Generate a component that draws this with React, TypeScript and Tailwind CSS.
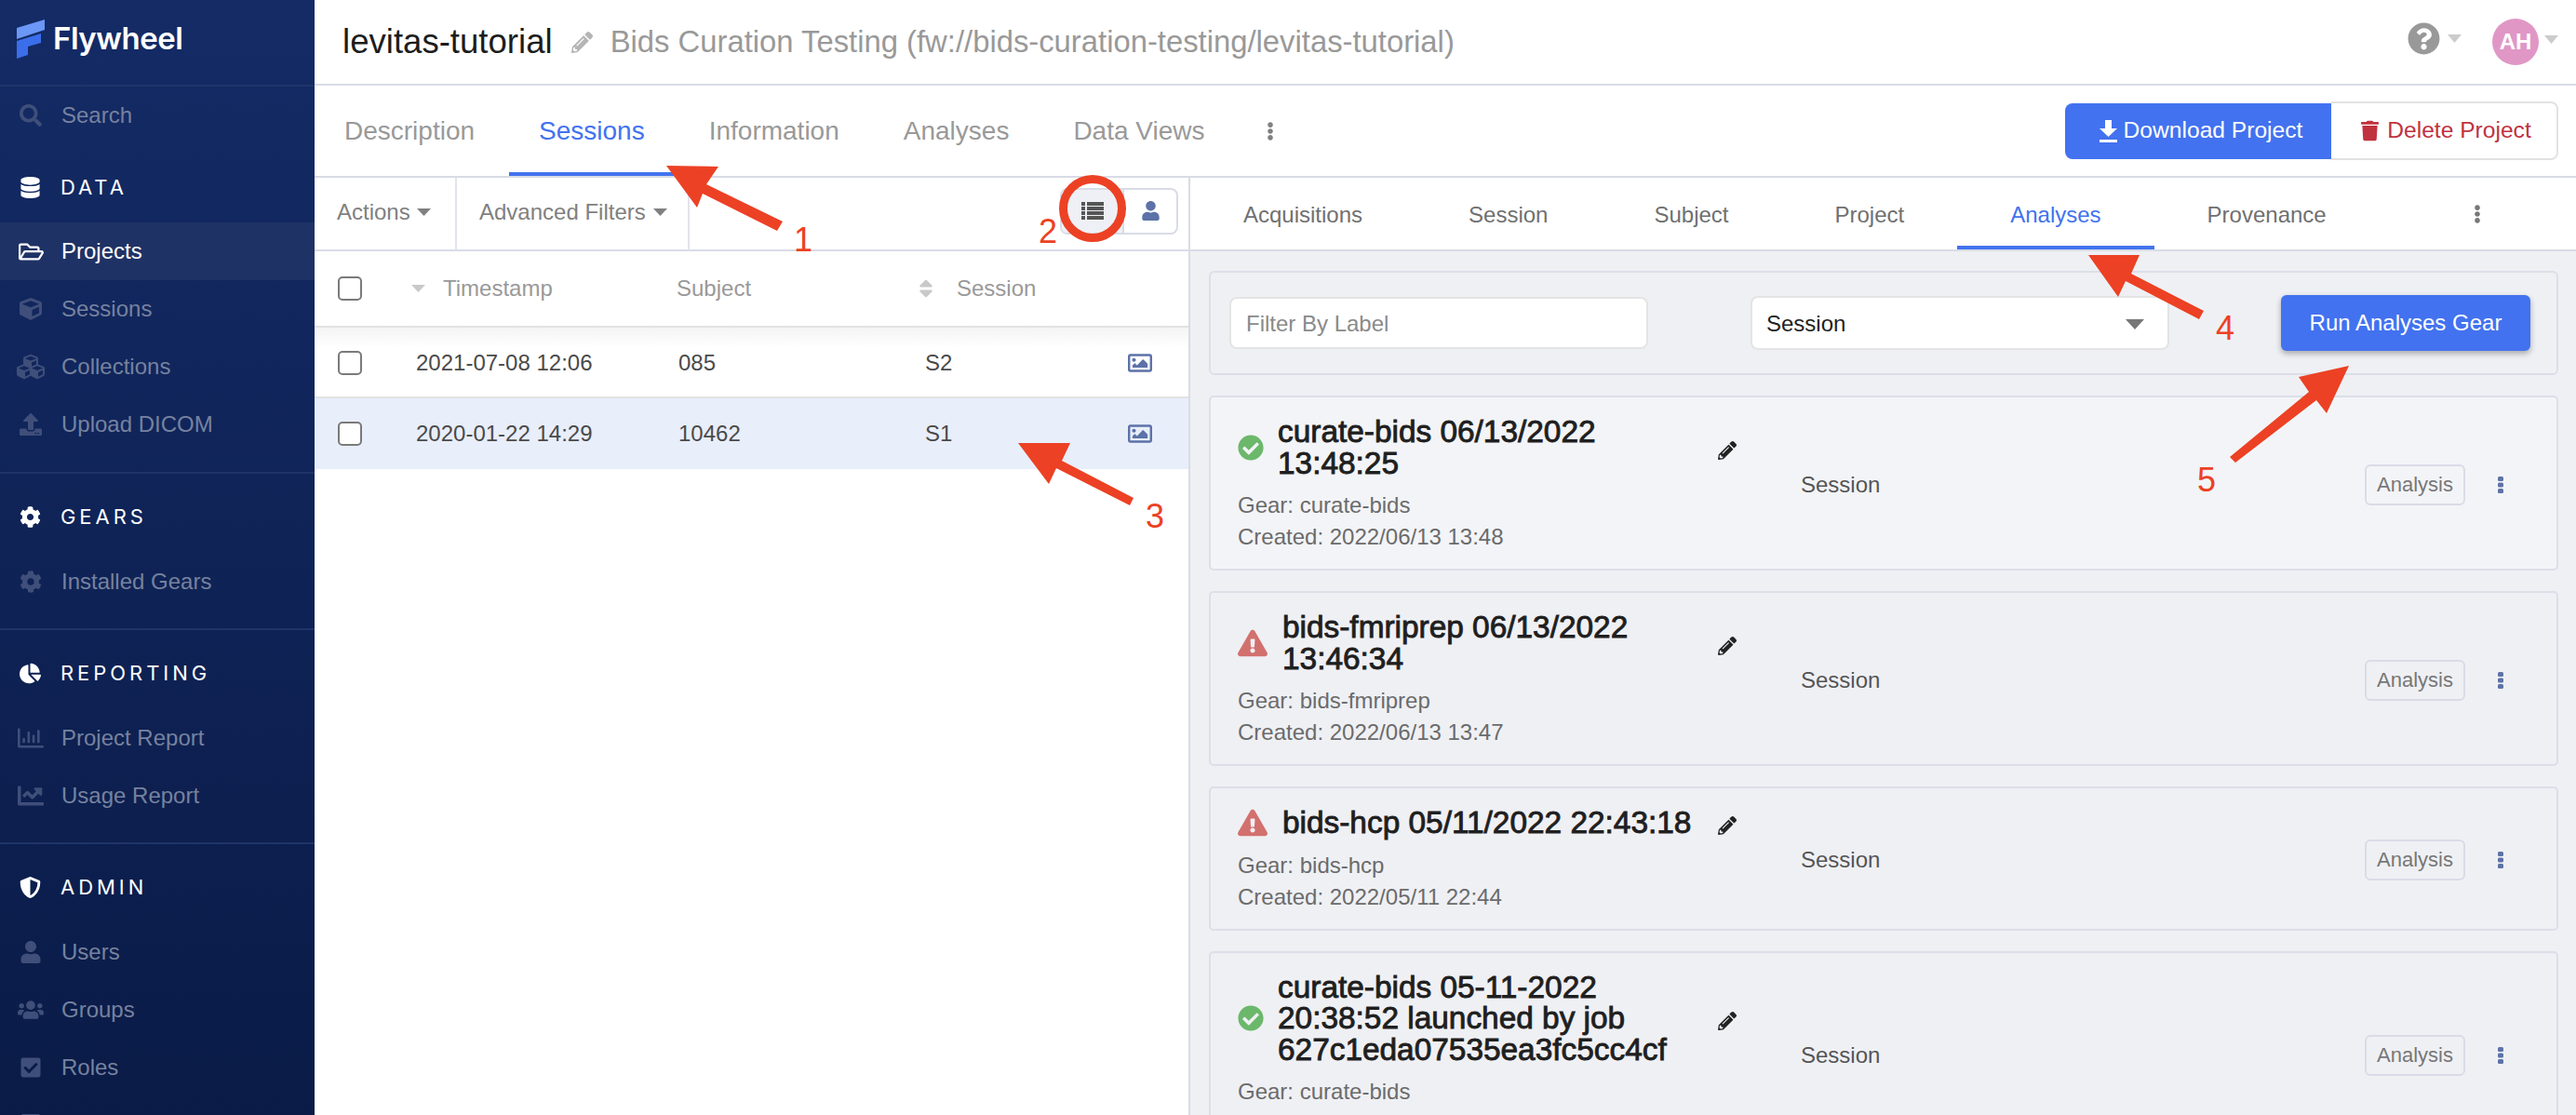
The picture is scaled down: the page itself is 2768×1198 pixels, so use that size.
import type { ReactNode } from 'react'
import {
  FaSearch, FaDatabase, FaRegFolderOpen, FaCube, FaCubes, FaUpload, FaCog, FaChartPie, FaRegChartBar,
  FaChartLine, FaShieldAlt, FaUser, FaUsers, FaCheckSquare, FaPencilAlt, FaQuestionCircle, FaTrash,
  FaRegImage, FaCheckCircle, FaExclamationTriangle, FaEllipsisV, FaSort, FaTabletAlt,
} from 'react-icons/fa'

function Caret({ className = '', w = 14, h = 8 }: { className?: string; w?: number; h?: number }) {
  return (
    <svg width={w} height={h} viewBox="0 0 14 8" preserveAspectRatio="none" className={className} fill="currentColor">
      <polygon points="0,0 14,0 7,8" />
    </svg>
  )
}

function Logo() {
  return (
    <div className="h-[91px] flex items-center pl-[18px] gap-[9px]">
      <svg width="30" height="42" viewBox="0 0 30 42" className="mb-[8px]">
        <path d="M0 9 L30 0 V11 L0 21Z" fill="#6b97f7" />
        <path d="M0 23 L26 15 V25 L12 29 V38 L0 42Z" fill="#3a6eea" />
      </svg>
      <span className="text-[33px] font-semibold text-white font-['Inter',sans-serif] tracking-[-0.5px] mb-[8px]">Flywheel</span>
    </div>
  )
}

function NavItem({ icon, label, active }: { icon: ReactNode; label?: string; active?: boolean }) {
  return (
    <div className={`h-[62px] flex items-center ${active ? 'bg-[#1f3265] text-white' : 'text-[#76829f]'}`}>
      <span className={`w-[66px] flex justify-center text-[24px] ${active ? 'text-white' : 'text-[#3f4f7a]'}`}>{icon}</span>
      <span className="text-[24px]">{label}</span>
    </div>
  )
}

function NavHeading({ icon, label }: { icon: ReactNode; label: string }) {
  return (
    <div className="h-[62px] flex items-center text-white">
      <span className="w-[65px] flex justify-center text-[23px]">{icon}</span>
      <span className="text-[22px] tracking-[0.18em] font-['Inter',sans-serif]">{label}</span>
    </div>
  )
}

function Sidebar() {
  return (
    <aside className="w-[338px] shrink-0 h-full overflow-hidden bg-gradient-to-b from-[#142b66] to-[#0a1b47]">
      <Logo />
      <div className="border-t-2 border-[#1f3468]">
        <NavItem icon={<FaSearch />} label="Search" />
      </div>
      <div className="mt-[15px] pb-[20px] border-b-2 border-[#1f3468]">
        <NavHeading icon={<FaDatabase />} label="DATA" />
        <div className="mt-[7px]">
          <NavItem active icon={<FaRegFolderOpen className="text-[27px]" />} label="Projects" />
          <NavItem icon={<FaCube />} label="Sessions" />
          <NavItem icon={<FaCubes className="text-[30px]" />} label="Collections" />
          <NavItem icon={<FaUpload />} label="Upload DICOM" />
        </div>
      </div>
      <div className="mt-[15px] pb-[19px] border-b-2 border-[#1f3468]">
        <NavHeading icon={<FaCog />} label="GEARS" />
        <div className="mt-[8px]">
          <NavItem icon={<FaCog />} label="Installed Gears" />
        </div>
      </div>
      <div className="mt-[15px] pb-[19px] border-b-2 border-[#1f3468]">
        <NavHeading icon={<FaChartPie />} label="REPORTING" />
        <div className="mt-[8px]">
          <NavItem icon={<FaRegChartBar className="text-[28px]" />} label="Project Report" />
          <NavItem icon={<FaChartLine className="text-[28px]" />} label="Usage Report" />
        </div>
      </div>
      <div className="mt-[15px]">
        <NavHeading icon={<FaShieldAlt />} label="ADMIN" />
        <div className="mt-[8px]">
          <NavItem icon={<FaUser />} label="Users" />
          <NavItem icon={<FaUsers className="text-[28px]" />} label="Groups" />
          <NavItem icon={<FaCheckSquare />} label="Roles" />
          <NavItem icon={<FaTabletAlt />} />
        </div>
      </div>
    </aside>
  )
}

function TopBar() {
  return (
    <header className="h-[92px] shrink-0 border-b-2 border-[#d9dce6] flex items-center pl-[30px] pr-[19px]">
      <span className="text-[36.6px] text-[#1d1d1d]">levitas-tutorial</span>
      <FaPencilAlt className="ml-[20px] text-[23px] text-[#b5b5b5]" />
      <span className="ml-[19px] text-[32.8px] text-[#999999]">Bids Curation Testing (fw://bids-curation-testing/levitas-tutorial)</span>
      <div className="ml-auto flex items-center">
        <FaQuestionCircle className="text-[35px] text-[#999999] mb-[8px]" />
        <Caret className="ml-[8px] mb-[8px] text-[#cccccc]" w={15} h={9} />
        <div className="ml-[33px] w-[50px] h-[50px] rounded-full bg-[#e097c6] text-white text-[24px] font-bold flex items-center justify-center">AH</div>
        <Caret className="ml-[6px] mb-[6px] text-[#cccccc]" w={15} h={9} />
      </div>
    </header>
  )
}

function ProjectTabs() {
  const tabs = ['Description', 'Sessions', 'Information', 'Analyses', 'Data Views']
  return (
    <div className="h-[99px] shrink-0 border-b-2 border-[#d9dce6] flex items-stretch pr-[19px]">
      <div className="flex items-stretch gap-[5px]">
        {tabs.map(t => (
          <div
            key={t}
            className={`px-[32px] flex items-center text-[28px] ${t === 'Sessions' ? 'text-[#4272ef] border-b-4 border-[#4272ef] pt-[4px]' : 'text-[#999999]'}`}
          >
            {t}
          </div>
        ))}
      </div>
      <div className="ml-[28px] flex items-center text-[#808080] text-[20px]"><FaEllipsisV /></div>
      <div className="ml-auto flex items-center">
        <button className="w-[286px] h-[60px] pl-[6px] bg-[#4272ef] rounded-l-[8px] text-white text-[24.6px] flex items-center justify-center gap-[7px]">
          <svg width="19" height="24" viewBox="0 0 19 24" fill="#ffffff">
            <path d="M6 0 H13 V9 H19 L9.5 18 L0 9 H6Z" />
            <rect x="0" y="21" width="19" height="3" />
          </svg>
          Download Project
        </button>
        <button className="w-[244px] h-[63px] pl-[5px] border-2 border-l-0 border-[#e2e2e2] rounded-r-[8px] text-[#c0323e] text-[24.6px] flex items-center justify-center gap-[9px]">
          <FaTrash className="w-[19px] h-[25px]" />
          Delete Project
        </button>
      </div>
    </div>
  )
}

function Checkbox() {
  return (
    <div className="w-[76px] flex justify-center">
      <span className="w-[26px] h-[26px] rounded-[5px] border-2 border-[#7a7a7a] bg-white" />
    </div>
  )
}

function SessionRow({ time, subject, session, selected }: { time: string; subject: string; session: string; selected?: boolean }) {
  return (
    <div className={`h-[76px] pt-[2px] flex items-center text-[24px] text-[#4a4a4a] border-b-2 ${selected ? 'bg-[#e8eefa] border-transparent' : 'bg-gradient-to-b from-[#f4f4f4] to-white to-30% border-[#e2e2e2]'}`}>
      <Checkbox />
      <div className="w-[315px] pl-[33px]">{time}</div>
      <div className="w-[265px]">{subject}</div>
      <div className="w-[218px]">{session}</div>
      <FaRegImage className="text-[26px] text-[#5d72a8]" />
    </div>
  )
}

function SessionsPanel() {
  return (
    <section className="w-[941px] shrink-0 border-r-2 border-[#d9dce6] flex flex-col bg-white">
      <div className="h-[79px] shrink-0 border-b-2 border-[#d9dce6] flex items-stretch text-[24px] text-[#808080]">
        <div className="w-[153px] pl-[24px] pb-[3px] border-r-2 border-[#e2e4ec] flex items-center gap-[7px]">
          Actions <Caret className="text-[#808080]" w={15} h={8} />
        </div>
        <div className="w-[250px] pl-[24px] pb-[3px] border-r-2 border-[#e2e4ec] flex items-center gap-[8px]">
          Advanced Filters <Caret className="text-[#808080]" w={15} h={8} />
        </div>
        <div className="ml-auto mr-[11px] mb-[6px] flex items-center">
          <div className="w-[127px] h-[50px] border-2 border-[#d9dce6] rounded-[8px] flex overflow-hidden">
            <div className="w-[67px] bg-[#eef0f5] border-r-2 border-[#d9dce6] flex items-center justify-center">
              <svg width="24" height="19" viewBox="0 0 24 19" fill="#555555">
                <rect x="0" y="0" width="4" height="4" /><rect x="6" y="0" width="18" height="4" />
                <rect x="0" y="5" width="4" height="4" /><rect x="6" y="5" width="18" height="4" />
                <rect x="0" y="10" width="4" height="4" /><rect x="6" y="10" width="18" height="4" />
                <rect x="0" y="15" width="4" height="4" /><rect x="6" y="15" width="18" height="4" />
              </svg>
            </div>
            <div className="flex-1 flex items-center justify-center text-[#5d72a8] text-[21px]"><FaUser /></div>
          </div>
        </div>
      </div>
      <div className="h-[82px] shrink-0 border-b-2 border-[#e2e2e2] flex items-center text-[24px] text-[#999999]">
        <Checkbox />
        <div className="w-[313px] pl-[28px] flex items-center gap-[19px]">
          <Caret className="text-[#c9c9c9]" w={15} h={8} />
          Timestamp
        </div>
        <div className="w-[256px]">Subject</div>
        <div className="flex items-center gap-[21px]">
          <FaSort className="text-[24px] text-[#c9c9c9]" />
          Session
        </div>
      </div>
      <SessionRow time="2021-07-08 12:06" subject="085" session="S2" />
      <SessionRow time="2020-01-22 14:29" subject="10462" session="S1" selected />
    </section>
  )
}

function AnalysisTabs() {
  const tabs = ['Acquisitions', 'Session', 'Subject', 'Project', 'Analyses', 'Provenance']
  return (
    <div className="h-[79px] shrink-0 bg-white border-b-2 border-[#d9dce6] flex items-stretch">
      {tabs.map(t => (
        <div
          key={t}
          className={`px-[57px] pt-[7px] border-b-4 flex items-center text-[24px] ${t === 'Analyses' ? 'text-[#4272ef] border-[#4272ef]' : 'text-[#707070] border-transparent'}`}
        >
          {t}
        </div>
      ))}
      <div className="ml-[95px] flex items-center text-[#777777] text-[20px]"><FaEllipsisV /></div>
    </div>
  )
}

type Analysis = { title: string; gear: string; created: string; ok: boolean; light?: boolean }

const analyses: Analysis[] = [
  { title: 'curate-bids 06/13/2022 13:48:25', gear: 'curate-bids', created: '2022/06/13 13:48', ok: true, light: true },
  { title: 'bids-fmriprep 06/13/2022 13:46:34', gear: 'bids-fmriprep', created: '2022/06/13 13:47', ok: false },
  { title: 'bids-hcp 05/11/2022 22:43:18', gear: 'bids-hcp', created: '2022/05/11 22:44', ok: false },
  { title: 'curate-bids 05-11-2022 20:38:52 launched by job 627c1eda07535ea3fc5cc4cf', gear: 'curate-bids', created: '2022/05/11 14:38', ok: true },
]

function AnalysisCard({ item }: { item: Analysis }) {
  return (
    <div className={`shrink-0 border-2 border-[#dcdfe8] rounded-[5px] pl-[29px] pt-[20px] pb-[17px] flex items-center ${item.light ? 'bg-[#f3f4f7]' : 'bg-[#eff0f4]'}`}>
      <div className="w-[538px] shrink-0">
        <div className="flex items-center">
          {item.ok ? (
            <FaCheckCircle className="w-[28px] h-[28px] mr-[15px] shrink-0 text-[#6bb86b]" />
          ) : (
            <FaExclamationTriangle className="w-[32px] h-[30px] mr-[16px] shrink-0 text-[#d2706e]" />
          )}
          <div className="flex-1 text-[33.4px] leading-[33.5px] text-[#1f1f1f] [-webkit-text-stroke:0.9px_#1f1f1f]">{item.title}</div>
          <FaPencilAlt className="ml-[14px] mr-[2px] mt-[6px] text-[20px] text-[#222222] shrink-0" />
        </div>
        <div className="mt-[12px] text-[24px] leading-[34px] text-[#6b6b6b]">
          <div>Gear: {item.gear}</div>
          <div>Created: {item.created}</div>
        </div>
      </div>
      <div className="ml-[67px] text-[24px] text-[#555555]">Session</div>
      <div className="ml-auto mr-[35px] w-[108px] h-[44px] border-2 border-[#d9dce6] rounded-[6px] text-[22px] text-[#777777] flex items-center justify-center">Analysis</div>
      <svg width="6" height="18" viewBox="0 0 6 18" fill="#5d72a8" className="mr-[57px]">
        <rect x="0" y="0" width="6" height="5" rx="1.5" />
        <rect x="0" y="6.5" width="6" height="5" rx="1.5" />
        <rect x="0" y="13" width="6" height="5" rx="1.5" />
      </svg>
    </div>
  )
}

function AnalysesPanel() {
  return (
    <section className="flex-1 flex flex-col bg-[#eff0f4] min-w-0">
      <AnalysisTabs />
      <div className="flex-1 flex flex-col gap-[22px] pl-[20px] pr-[19px] pt-[21px]">
        <div className="h-[112px] shrink-0 border-2 border-[#dcdfe8] rounded-[6px] pl-[20px] flex items-center">
          <input
            placeholder="Filter By Label"
            className="w-[450px] h-[56px] pt-[2px] bg-white border-2 border-[#e4e4e4] rounded-[8px] px-[16px] text-[24px] placeholder:text-[#8a8a8a]"
          />
          <div className="ml-[110px] w-[450px] h-[58px] pt-[2px] bg-white border-2 border-[#e4e4e4] rounded-[8px] pl-[15px] pr-[25px] flex items-center justify-between text-[24px] text-[#222222]">
            Session
            <Caret className="text-[#777777]" w={20} h={11} />
          </div>
          <button className="ml-[120px] w-[268px] h-[60px] bg-[#4272ef] rounded-[6px] text-white text-[24px] shadow-[0_3px_6px_rgba(0,0,0,0.3)]">Run Analyses Gear</button>
        </div>
        {analyses.map(a => <AnalysisCard key={a.title} item={a} />)}
      </div>
    </section>
  )
}

// numbered red callouts drawn over the screenshot
function Annotations() {
  const numbers = [
    { n: '1', c: 'left-[853px] top-[238px]' },
    { n: '2', c: 'left-[1116px] top-[229px]' },
    { n: '3', c: 'left-[1231px] top-[535px]' },
    { n: '4', c: 'left-[2381px] top-[333px]' },
    { n: '5', c: 'left-[2361px] top-[496px]' },
  ]
  return (
    <>
      <svg className="absolute inset-0 pointer-events-none" width="2768" height="1198" viewBox="0 0 2768 1198">
        <g fill="#ec4124">
          <polygon points="716,178 772,179 759,198 841,238 835,248 755,208 749,223" />
          <polygon points="1094,476 1150,476 1141,495 1218,535 1214,543 1135,503 1127,520" />
          <polygon points="2244,274 2299,274 2290,294 2368,334 2363,343 2284,302 2276,319" />
          <polygon points="2524,393 2470,405 2481,421 2396,491 2402,497 2489,430 2500,444" />
        </g>
        <circle cx="1174" cy="224" r="31.5" fill="none" stroke="#ec4124" strokeWidth="9" />
      </svg>
      {numbers.map(({ n, c }) => (
        <span key={n} className={`absolute ${c} text-[36px] leading-[40px] text-[#ec4124]`}>{n}</span>
      ))}
    </>
  )
}

export default function App() {
  return (
    <div className="relative w-[2768px] h-[1198px] overflow-hidden flex bg-white font-['Liberation_Sans',Arial,sans-serif]">
      <Sidebar />
      <main className="flex-1 flex flex-col min-w-0">
        <TopBar />
        <ProjectTabs />
        <div className="flex-1 flex min-h-0">
          <SessionsPanel />
          <AnalysesPanel />
        </div>
      </main>
      <Annotations />
    </div>
  )
}
